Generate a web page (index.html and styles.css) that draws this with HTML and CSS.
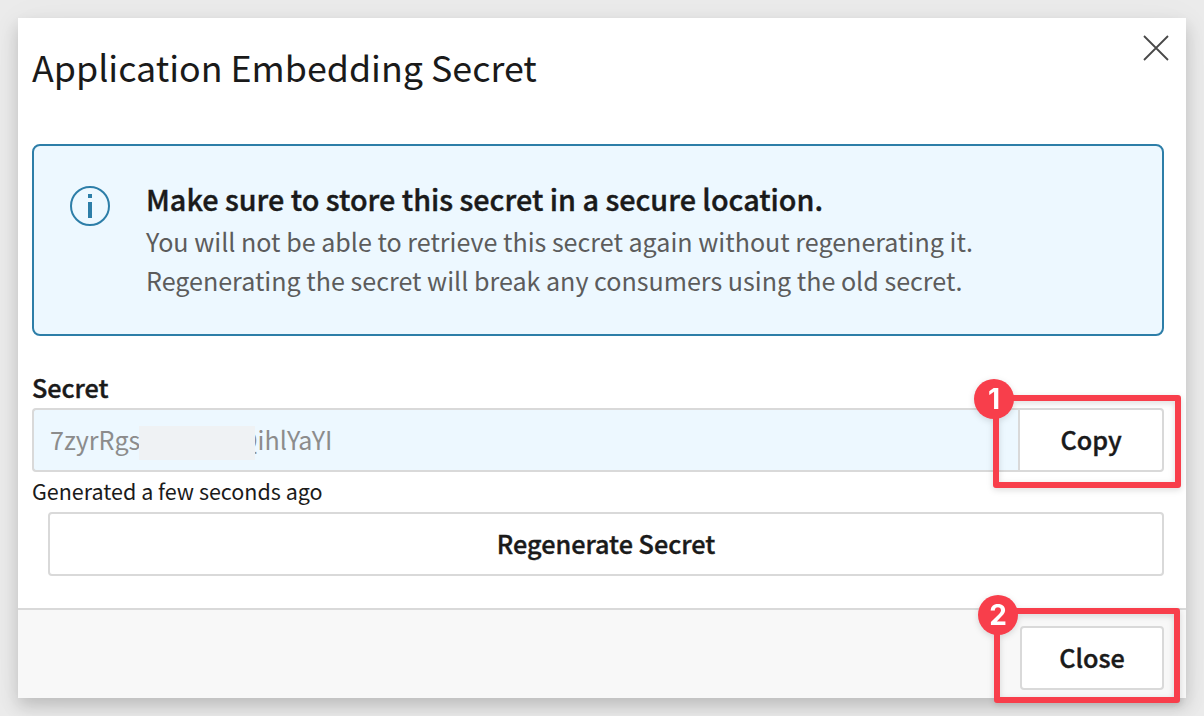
FILE: index.html
```html
<!DOCTYPE html>
<html lang="en">
<head>
<meta charset="utf-8">
<title>Application Embedding Secret</title>
<link rel="stylesheet" href="styles.css">
</head>
<body>
<main class="modal">
  <header class="modal-header">
    <h1 class="title">Application Embedding Secret</h1>
    <svg class="close-icon" viewBox="0 0 26 26"><path d="M1 1L25 25M25 1L1 25"/></svg>
  </header>
  <section class="modal-body">
    <div class="notice">
      <svg class="info-icon" viewBox="0 0 40 40"><circle cx="20" cy="20" r="19"/><path d="M18 8h4v4h-4zM18 16h4v16h-4z"/></svg>
      <div class="notice-content">
        <h2 class="notice-title">Make sure to store this secret in a secure location.</h2>
        <p class="notice-text">You will not be able to retrieve this secret again without regenerating it.</p>
        <p class="notice-text">Regenerating the secret will break any consumers using the old secret.</p>
      </div>
    </div>
    <div class="label">Secret</div>
    <div class="secret-row">
      <div class="secret-field"><span class="secret-start">7zyrRgs</span><span class="mask"></span><span class="secret-end">QihlYaYI</span></div>
      <button class="button copy">Copy</button>
    </div>
    <div class="generated">Generated a few seconds ago</div>
    <button class="button regenerate">Regenerate Secret</button>
  </section>
  <footer class="modal-footer">
    <button class="button close">Close</button>
  </footer>
</main>
<div class="callout callout-copy"><span class="badge">1</span></div>
<div class="callout callout-close"><span class="badge">2</span></div>
</body>
</html>
```

FILE: styles.css
```css
* { box-sizing: border-box; }
body {
  margin: 0;
  width: 1204px;
  height: 716px;
  padding: 18px;
  overflow: hidden;
  position: relative;
  background: #ebebeb;
  color: #1a1a1a;
  font-family: "Noto Sans CJK SC", "Noto Sans", sans-serif;
}
h1, h2, p { margin: 0; }
.modal {
  width: 1168px;
  height: 680px;
  display: flex;
  flex-direction: column;
  background: #fff;
  box-shadow: 0 8px 16px rgba(0, 0, 0, 0.18), 0 4px 40px rgba(0, 0, 0, 0.04);
}
.modal-header {
  height: 126px;
  padding: 17px 17px 0 14px;
  display: flex;
  justify-content: space-between;
  align-items: flex-start;
}
.title { font-size: 35.8px; line-height: 62px; font-weight: 400; white-space: nowrap; }
.close-icon { width: 26px; height: 26px; fill: none; stroke: #484848; stroke-width: 1.8; }
.modal-body { height: 464px; padding: 0 22px 0 14px; display: flex; flex-direction: column; }
.notice {
  height: 192px;
  display: flex;
  padding: 33px 36px;
  gap: 36px;
  border: 2px solid #2d7ea8;
  border-radius: 8px;
  background: #edf8ff;
}
.info-icon { width: 40px; height: 40px; margin-top: 7px; fill: #2d7ea8; flex: none; }
.info-icon circle { fill: none; stroke: #2d7ea8; stroke-width: 2; }
.notice-content { white-space: nowrap; }
.notice-title { margin-bottom: 3px; font-size: 28.75px; line-height: 40px; font-weight: 500; }
.notice-text { font-size: 25.08px; line-height: 39px; font-weight: 400; color: #5c5c5c; }
.label { height: 72px; padding-top: 31px; font-size: 25.2px; line-height: 40px; font-weight: 500; }
.notice-title, .label, .button { -webkit-text-stroke: 0.4px #1a1a1a; }
.secret-row { height: 64px; display: flex; }
.secret-field {
  width: 986px;
  display: flex;
  align-items: center;
  padding: 0 0 2px 16px;
  border: 2px solid #d9d9d9;
  border-right: 0;
  border-radius: 4px 0 0 4px;
  background: #edf8ff;
  color: #8c8c8c;
  font-size: 25.1px;
  line-height: 58px;
}
.secret-start { width: 89px; }
.mask { width: 116px; height: 34px; margin-top: 8px; background: #eff2f4; position: relative; z-index: 1; }
.secret-end { margin-left: -16px; }
.button {
  padding: 0 0 2px;
  border: 2px solid #d9d9d9;
  border-radius: 4px;
  background: #fff;
  color: #1a1a1a;
  font: 500 25.2px/58px "Noto Sans CJK SC", "Noto Sans", sans-serif;
}
.copy { width: 146px; height: 64px; border-radius: 0 4px 4px 0; }
.generated { height: 40px; font-size: 21.5px; line-height: 38px; }
.regenerate { height: 64px; margin-left: 16px; }
.modal-footer {
  height: 90px;
  display: flex;
  justify-content: flex-end;
  padding: 16px 22px 0 0;
  border-top: 2px solid #d9d9d9;
  background: #f8f8f8;
}
.close { width: 144px; height: 64px; }
.callout {
  position: absolute;
  border: 6px solid #f83e4b;
  border-radius: 3px;
  filter: drop-shadow(0 2px 3px rgba(0, 0, 0, 0.14));
}
.callout-copy { left: 993px; top: 395px; width: 188px; height: 93px; }
.callout-close { left: 994px; top: 608px; width: 186px; height: 95px; }
.badge {
  position: absolute;
  width: 40px;
  height: 40px;
  border-radius: 50%;
  background: #f83e4b;
  color: #fff;
  font: 700 28px/40px Inter, sans-serif;
  text-align: center;
}
.callout-copy .badge { left: -25px; top: -22px; }
.callout-close .badge { left: -22px; top: -19px; }
```
